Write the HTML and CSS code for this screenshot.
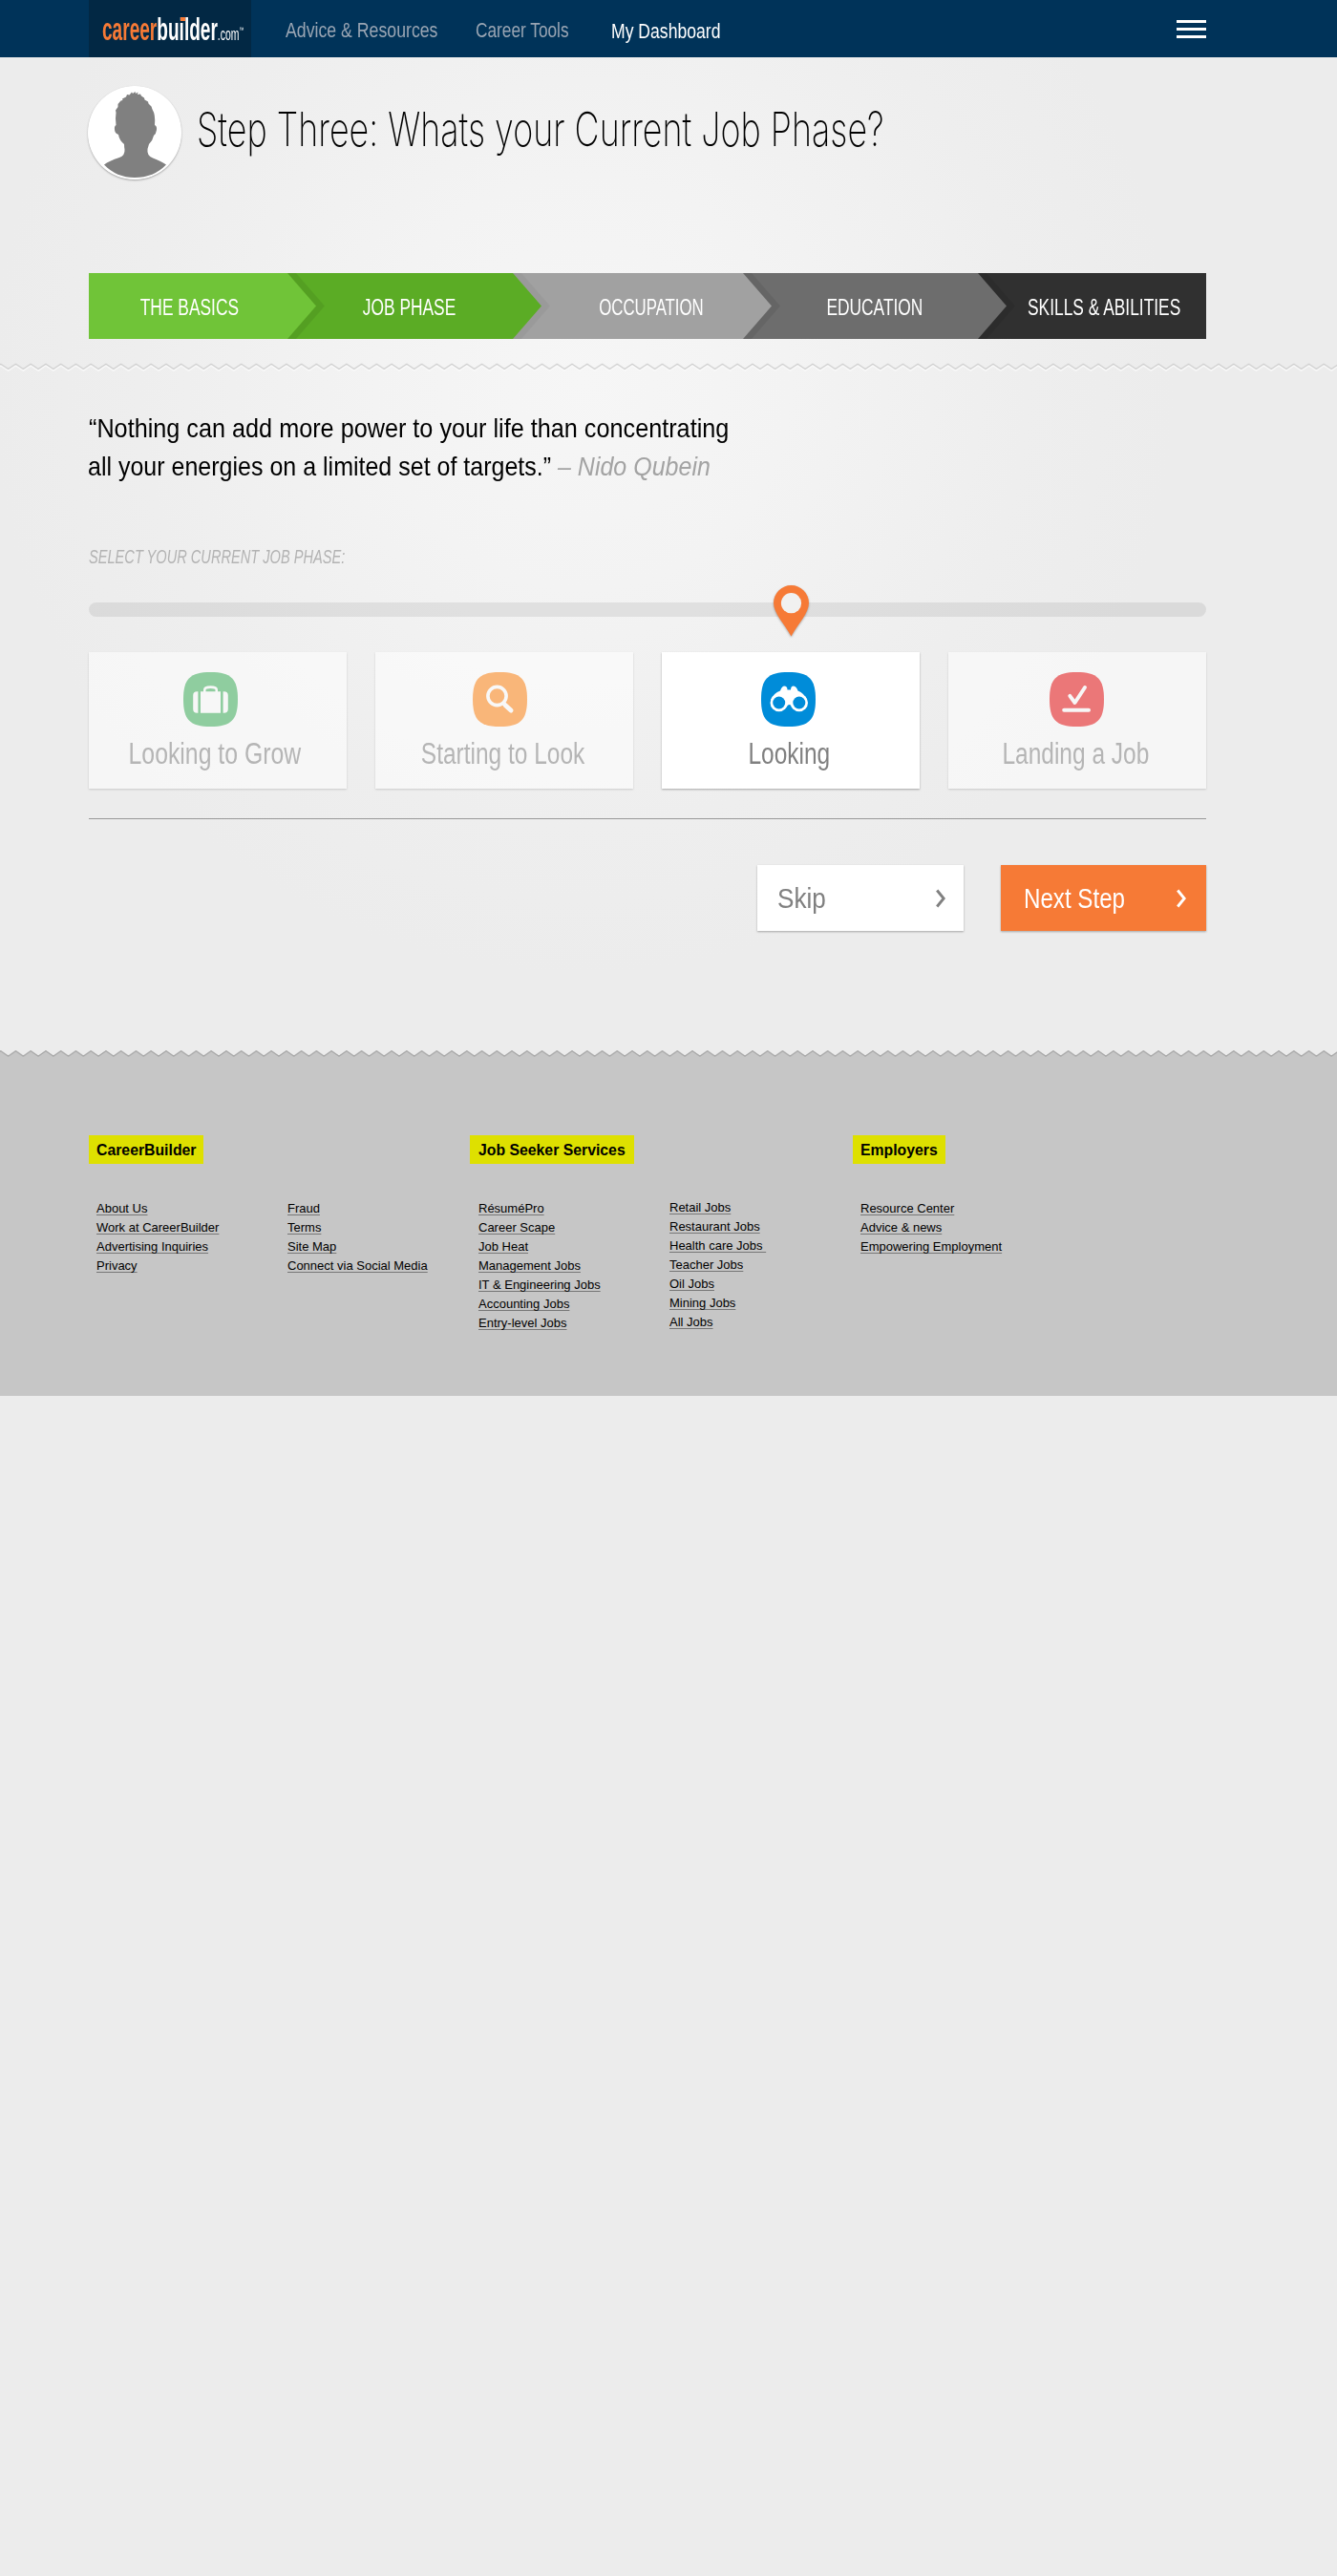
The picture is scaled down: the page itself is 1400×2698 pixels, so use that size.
FILE: index.html
```html
<!DOCTYPE html>
<html lang="en">
<head>
<meta charset="utf-8">
<title>CareerBuilder – Current Job Phase</title>
<link rel="stylesheet" href="styles.css">
</head>
<body>
<header class="topbar">
  <a class="logo"><span class="logo-text"><span class="logo-career">career</span>builder<small>.com</small><sup>™</sup></span><i class="logo-dot"></i></a>
  <nav class="nav">
    <a class="nav-item nav-advice"><span>Advice &amp; Resources</span></a>
    <a class="nav-item nav-tools"><span>Career Tools</span></a>
    <a class="nav-item nav-dash"><span>My Dashboard</span></a>
  </nav>
  <button class="menu" aria-label="Menu"><i></i><i></i><i></i></button>
</header>

<main>
  <div class="wrap">
    <div class="title-row">
      <svg class="avatar" viewBox="0 0 98 98" width="98" height="98">
        <circle cx="49" cy="49" r="49" fill="#fff"/>
        <path fill="#808080" d="M17 82.500Q22 78.500 33 75Q39 73 38.500 66.500Q38 64.500 38 61Q33 57 32 51Q28 49.500 28 45.500Q27.500 42 29.500 41L29 34L29.500 28L29 25.500L31.500 22L31.500 19L34.500 15.500L36.500 15L36 13.500L40 11.500L41 9L43.500 9.500L46 6.500L47 8L49.500 6L50 8L52.500 6.500L52 9L55 8.500L56 10.500L59 12.500L59.500 14.500L63 16.500L63.500 18.500L66.500 21.500L67.500 24.500Q71 30 70 41Q72.500 42 72 46Q71.500 50 69 52Q68 57 64 61L62.500 66Q61.500 73 68 75.500Q77 79 82 82.500Q69 96 49 96Q30 96 17 82.500Z"/>
      </svg>
      <h1><span>Step Three: Whats your Current Job Phase?</span></h1>
    </div>
    <ol class="steps">
      <li class="step step-1"><span>THE BASICS</span></li>
      <li class="step step-2"><span>JOB PHASE</span></li>
      <li class="step step-3"><span>OCCUPATION</span></li>
      <li class="step step-4"><span>EDUCATION</span></li>
      <li class="step step-5"><span>SKILLS &amp; ABILITIES</span></li>
    </ol>
  </div>

  <svg class="divider" width="1400" height="12">
    <defs>
      <pattern id="zig" width="15.745" height="12" patternUnits="userSpaceOnUse" patternTransform="translate(95.2)">
        <path d="M-7.870 10L0 4.800L7.870 10L15.745 4.800L23.600 10" fill="none" stroke="#fafafa" stroke-width="1.500"/>
        <path d="M-7.870 8.500L0 3.300L7.870 8.500L15.745 3.300L23.600 8.500" fill="none" stroke="#cfcfcf" stroke-width="1.200"/>
      </pattern>
    </defs>
    <rect width="1400" height="12" fill="url(#zig)"/>
  </svg>

  <div class="wrap">
    <blockquote class="quote">
      <p><span class="narrow">“Nothing can add more power to your life than concentrating</span></p>
      <p><span class="narrow narrow-second">all your energies on a limited set of targets.” <cite>– Nido Qubein</cite></span></p>
    </blockquote>
    <p class="prompt"><span>SELECT YOUR CURRENT JOB PHASE:</span></p>
    <div class="slider">
      <svg class="pin" viewBox="0 0 37 54" width="37" height="54">
        <path fill="#f67a36" fill-rule="evenodd" d="M18.500 0A18.500 18.500 0 0 1 37 18.500C37 29 26 40 18.500 53.500C11 40 0 29 0 18.500A18.500 18.500 0 0 1 18.500 0Z"/>
        <circle cx="18.500" cy="18.700" r="10.600" fill="#f1f1f0"/>
      </svg>
    </div>
    <div class="phases">
      <section class="phase phase-grow">
        <svg class="badge" viewBox="0 0 57 57" width="57" height="57">
          <path fill="#8fcd9f" d="M28.500 0C50 0 57 7 57 28.500S50 57 28.500 57S0 50 0 28.500S7 0 28.500 0Z"/>
          <path fill="#f7f7f7" d="M14.500 20.200h.900v22.600h-.900q-4.300 0-4.300-4v-14.600q0-4 4.300-4ZM42.500 20.200h-.900v22.600h.900q4.300 0 4.300-4v-14.600q0-4-4.300-4ZM18 20.200h3v-2q0-4 7.500-4t7.500 4v2h3v22.600H18ZM23.500 20.200h10v-1.500q0-1.800-5-1.800t-5 1.800Z"/>
        </svg>
        <h2><span>Looking to Grow</span></h2>
      </section>
      <section class="phase phase-start">
        <svg class="badge" viewBox="0 0 57 57" width="57" height="57">
          <path fill="#f9b679" d="M28.500 0C50 0 57 7 57 28.500S50 57 28.500 57S0 50 0 28.500S7 0 28.500 0Z"/>
          <circle cx="25.500" cy="25" r="9.600" fill="none" stroke="#f8f8f8" stroke-width="3.600"/>
          <path d="M31.500 32L34 34.500" stroke="#f8f8f8" stroke-width="3.600"/>
          <path d="M34 34.500L40 40" stroke="#f8f8f8" stroke-width="5" stroke-linecap="round"/>
        </svg>
        <h2><span>Starting to Look</span></h2>
      </section>
      <section class="phase phase-looking">
        <svg class="badge" viewBox="0 0 57 57" width="57" height="57">
          <path fill="#008cd9" d="M28.500 0C50 0 57 7 57 28.500S50 57 28.500 57S0 50 0 28.500S7 0 28.500 0Z"/>
          <path fill="#fff" d="M10 29Q13 22 20 19.500Q21.500 15 24 14.500Q27.500 14.500 27.500 18.500H31Q31 14.500 34 14.500Q37 15 38.500 19.500Q45 22 48 29L41 40.500L32 35.500Q31 34 29.500 34Q28 34 27 35.500L18 40.500Z"/>
          <circle cx="18.700" cy="32" r="9.200" fill="#fff"/><circle cx="39.800" cy="32" r="9.200" fill="#fff"/>
          <circle cx="18.700" cy="32" r="6.500" fill="#008cd9"/><circle cx="39.800" cy="32" r="6.500" fill="#008cd9"/>
        </svg>
        <h2><span>Looking</span></h2>
      </section>
      <section class="phase phase-landing">
        <svg class="badge" viewBox="0 0 57 57" width="57" height="57">
          <path fill="#eb7778" d="M28.500 0C50 0 57 7 57 28.500S50 57 28.500 57S0 50 0 28.500S7 0 28.500 0Z"/>
          <path d="M21.300 24.800L26.500 32L37 16" fill="none" stroke="#f7f7f7" stroke-width="3.900" stroke-linecap="round" stroke-linejoin="round"/>
          <path d="M15.200 39.800H41" stroke="#f7f7f7" stroke-width="4" stroke-linecap="round"/>
        </svg>
        <h2><span>Landing a Job</span></h2>
      </section>
    </div>
    <div class="actions">
      <button class="btn btn-skip"><span>Skip</span><svg width="10" height="20" viewBox="0 0 10 20"><path d="M1.200 1.500L8.200 10L1.200 18.500" fill="none" stroke="currentColor" stroke-width="2.900"/></svg></button>
      <button class="btn btn-next"><span>Next Step</span><svg width="10" height="20" viewBox="0 0 10 20"><path d="M1.200 1.500L8.200 10L1.200 18.500" fill="none" stroke="currentColor" stroke-width="2.900"/></svg></button>
    </div>
  </div>
</main>

<footer>
  <svg class="footer-edge" width="1400" height="10">
    <defs>
      <pattern id="edge" width="15.745" height="10" patternUnits="userSpaceOnUse" patternTransform="translate(95.200)">
        <path d="M-7.870 7.500L0 2L7.870 7.500L15.745 2L23.600 7.500V11H-7.870Z" fill="#c6c6c6"/>
        <path d="M-7.870 8.300L0 2.800L7.870 8.300L15.745 2.800L23.600 8.300" fill="none" stroke="#a9a9a9" stroke-width="1.300"/>
      </pattern>
    </defs>
    <rect width="1400" height="10" fill="url(#edge)"/>
  </svg>
  <div class="footer-body">
    <section class="group">
      <h3>CareerBuilder</h3>
      <div class="lists">
        <ul><li><a>About Us</a></li><li><a>Work at CareerBuilder</a></li><li><a>Advertising Inquiries</a></li><li><a>Privacy</a></li></ul>
        <ul><li><a>Fraud</a></li><li><a>Terms</a></li><li><a>Site Map</a></li><li><a>Connect via Social Media</a></li></ul>
      </div>
    </section>
    <section class="group group-seekers">
      <h3>Job Seeker Services</h3>
      <div class="lists">
        <ul><li><a>RésuméPro</a></li><li><a>Career Scape</a></li><li><a>Job Heat</a></li><li><a>Management Jobs</a></li><li><a>IT &amp; Engineering Jobs</a></li><li><a>Accounting Jobs</a></li><li><a>Entry-level Jobs</a></li></ul>
        <ul class="raised"><li><a>Retail Jobs</a></li><li><a>Restaurant Jobs</a></li><li><a>Health care Jobs&nbsp;</a></li><li><a>Teacher Jobs</a></li><li><a>Oil Jobs</a></li><li><a>Mining Jobs</a></li><li><a>All Jobs</a></li></ul>
      </div>
    </section>
    <section class="group">
      <h3>Employers</h3>
      <div class="lists">
        <ul><li><a>Resource Center</a></li><li><a>Advice &amp; news</a></li><li><a>Empowering Employment</a></li></ul>
      </div>
    </section>
  </div>
</footer>
</body>
</html>
```
FILE: styles.css
```css
* { box-sizing: border-box; margin: 0; padding: 0; }

body {
  width: 1400px;
  min-height: 2698px;
  font-family: "Liberation Sans", Arial, sans-serif;
  color: #000;
  background: #ececec radial-gradient(circle 620px at 610px 400px, #f6f6f6 0, #f3f3f3 35%, #eeeeee 75%, #ececec 100%) no-repeat;
}

ol, ul { list-style: none; }
svg { display: block; }
button { border: 0; background: none; font: inherit; color: inherit; text-align: left; }
.wrap { width: 1170px; margin-left: 93px; }

/* condensed lettering: labels are squeezed horizontally */
.nav-item span, .logo-text, h1 span, .step span, .narrow, .prompt span, .phase h2 span, .btn span {
  display: inline-block;
  white-space: nowrap;
  transform-origin: 0 50%;
}

/* top bar */
.topbar { display: flex; height: 60px; padding-left: 93px; background: #003359; }
.logo { position: relative; width: 170px; height: 60px; padding-left: 14px; background: #022844; overflow: hidden; }
.logo-text { color: #fff; font-weight: bold; font-size: 33px; line-height: 62px; transform: scaleX(.578); }
.logo-career { color: #f67a36; }
.logo-text small { font-size: 18px; font-weight: normal; }
.logo-text sup { font-size: 8px; line-height: 0; vertical-align: 8px; font-weight: normal; }
.logo-dot { position: absolute; left: 95.5px; top: 18px; width: 5px; height: 4px; background: #f67a36; }
.nav { display: flex; }
.nav-item { font-size: 22px; line-height: 64px; color: #99a5b3; }
.nav-advice { width: 199px; margin-left: 36px; }
.nav-advice span { transform: scaleX(.805); }
.nav-tools { width: 142px; }
.nav-tools span { transform: scaleX(.785); }
.nav-dash { width: 150px; line-height: 65px; color: #fff; }
.nav-dash span { transform: scaleX(.8); }
.menu { display: flex; flex-direction: column; gap: 5px; width: 31px; margin: 21px 137px 0 auto; }
.menu i { height: 3px; background: #fff; }

/* title */
.title-row { display: flex; padding-top: 30px; }
.avatar { flex: none; margin-left: -1px; border-radius: 50%; box-shadow: 0 1px 2px rgba(0,0,0,.3); }
h1 { margin-left: 16px; height: 98px; font-family: Inter, sans-serif; font-size: 49.5px; font-weight: 200; line-height: 90px; }
h1 span { transform: scaleX(.725); }

/* step arrows */
.steps { display: flex; height: 69px; margin-top: 98px; }
.step {
  position: relative;
  flex: none;
  height: 69px;
  margin-left: -30px;
  color: #fff;
  font-size: 23px;
  line-height: 73px;
  text-align: center;
  clip-path: polygon(0 0, calc(100% - 30px) 0, 100% 50%, calc(100% - 30px) 100%, 0 100%);
}
.step span { position: relative; transform-origin: 50% 50%; transform: scaleX(.755); }
.step + .step::before {
  content: "";
  position: absolute;
  inset: 0 auto 0 0;
  width: 39px;
  background: rgba(0,0,0,.07);
  clip-path: polygon(0 0, 9px 0, 100% 50%, 9px 100%, 0 100%);
}
.step-1 { z-index: 5; width: 238px; margin-left: 0; padding-right: 27px; background: #70c438; }
.step-2 { z-index: 4; width: 266px; padding-right: 10px; background: #5bac25; }
.step-3 { z-index: 3; width: 271px; padding-left: 19px; background: #a1a1a1; }
.step-4 { z-index: 2; width: 276px; background: #6d6d6d; }
.step-5 { z-index: 1; width: 239px; padding-left: 25px; background: #303030; clip-path: none; }
.step.step-3 span { transform: scaleX(.73); }
.step.step-3::before { background: rgba(0,0,0,.04); }

.divider { margin-top: 23px; }

/* quote */
.quote { height: 80px; margin-top: 39px; font-size: 28px; line-height: 40px; }
.narrow { transform: scaleX(.901); }
.narrow-second { margin-left: -1px; transform: scaleX(.893); }
.quote cite { color: #a3a3a3; }
.prompt { margin-top: 62px; font-size: 20px; font-style: italic; line-height: 24px; color: #b3b3b3; }
.prompt span { transform: scaleX(.73); }

/* slider */
.slider { position: relative; height: 15px; margin-top: 36px; border-radius: 8px; background: rgba(0,0,0,.075); }
.pin { position: absolute; left: 717px; top: -18px; filter: drop-shadow(0 1px 1px rgba(0,0,0,.3)); }

/* phase cards */
.phases { display: grid; grid-template-columns: repeat(4, 270px); gap: 30px; margin-top: 37px; padding-bottom: 31px; border-bottom: 1px solid #999; }
.phase { height: 143px; padding-top: 21px; background: rgba(255,255,255,.55); box-shadow: 0 1px 2px rgba(0,0,0,.15); }
.phase h2 { margin-top: 9px; padding-right: 3px; font-size: 31px; font-weight: normal; line-height: 40px; text-align: center; color: #b5b5b5; }
.phase h2 span { transform-origin: 50% 50%; transform: scaleX(.79); }
.phase-grow .badge { margin-left: 99px; }
.phase-start .badge { margin-left: 101.5px; }
.phase-looking .badge { margin-left: 103.5px; }
.phase-landing .badge { margin-left: 106px; }
.phase.phase-grow h2 { padding-right: 6px; }
.phase-grow h2 span { transform: scaleX(.8); }
.phase-looking { background: #fff; box-shadow: 0 1px 2px rgba(0,0,0,.3); }
.phase-looking h2 { color: #808080; }

/* actions */
.actions { display: flex; justify-content: flex-end; gap: 39px; margin-top: 48px; }
.btn { display: flex; justify-content: space-between; height: 69px; padding: 0 19px 0 21px; font-size: 30px; line-height: 69px; box-shadow: 0 1px 2px rgba(0,0,0,.3); }
.btn svg { margin-top: 25px; }
.btn-skip { width: 216px; background: #fff; color: #808080; }
.btn-skip span { transform: scaleX(.87); }
.btn-next { width: 215px; padding: 0 21px 0 24px; background: #f67a36; color: #fff; }
.btn-next span { transform: scaleX(.805); }

/* footer */
footer { margin-top: 123px; }
.footer-body { display: flex; height: 354px; padding: 81px 0 0 93px; background: #c6c6c6; }
.group { flex: none; width: 400px; }
h3 { display: inline-block; height: 30px; padding: 0 8px; background: #dee000; font-size: 15.800px; line-height: 31px; }
.group-seekers h3 { margin-left: -1px; padding: 0 9px; }
.lists { display: flex; margin-top: 37px; padding-left: 8px; }
.lists ul { flex: none; width: 200px; }
.lists li { height: 20px; font-size: 13px; line-height: 20px; }
.lists a { text-decoration: underline 1px #777; text-underline-offset: 2px; text-decoration-skip-ink: none; }
.lists .raised { margin-top: -1px; }
```
